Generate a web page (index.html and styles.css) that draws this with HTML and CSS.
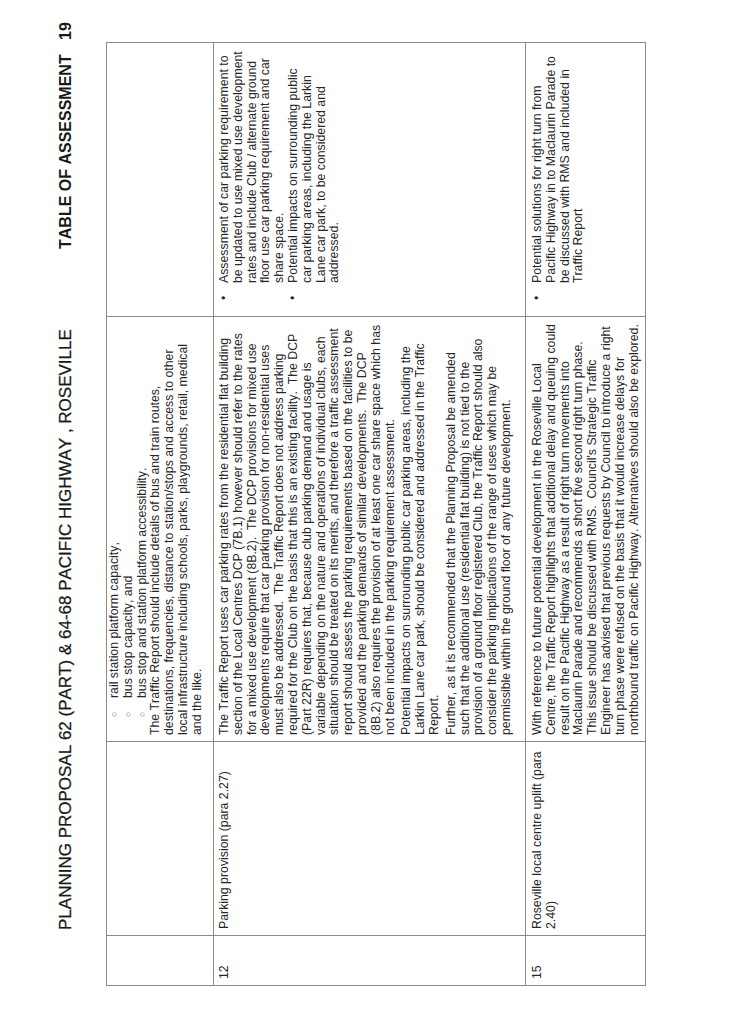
FILE: index.html
```html
<!DOCTYPE html>
<html lang="en">
<head>
<meta charset="utf-8">
<title>Table of Assessment 19</title>
<link rel="stylesheet" href="styles.css">
</head>
<body>
<div class="page">
  <header class="head">
    <h1 class="title">PLANNING PROPOSAL 62 (PART) &amp; 64-68 PACIFIC HIGHWAY , ROSEVILLE</h1>
    <div class="section"><span class="section-name">TABLE OF ASSESSMENT</span><span class="pageno">19</span></div>
  </header>
  <table class="assess">
    <colgroup><col class="c-no"><col class="c-item"><col class="c-desc"><col class="c-rec"></colgroup>
    <tr class="r-cont">
      <td></td>
      <td></td>
      <td>
        <div class="desc">
          <ul class="circles">
            <li><span class="mk">○</span><span>rail station platform capacity,</span></li>
            <li><span class="mk">○</span><span>bus stop capacity, and</span></li>
            <li><span class="mk">○</span><span>bus stop and station platform accessibility.</span></li>
          </ul>
          <p>The Traffic Report should include details of bus and train routes, destinations, frequencies, distance to station/stops and access to other local infrastructure including schools, parks, playgrounds, retail, medical and the like.</p>
        </div>
      </td>
      <td></td>
    </tr>
    <tr class="r-12">
      <td>12</td>
      <td>Parking provision (para 2.27)</td>
      <td>
        <div class="desc">
          <p>The Traffic Report uses car parking rates from the residential flat building section of the Local Centres DCP (7B.1) however should refer to the rates for a mixed use development (8B.2).&nbsp; The DCP provisions for mixed use developments require that car parking provision for non-residential uses must also be addressed.&nbsp; The Traffic Report does not address parking required for the Club on the basis that this is an existing facility.&nbsp; The DCP (Part 22R) requires that, because club parking demand and usage is variable depending on the nature and operations of individual clubs, each situation should be treated on its merits, and therefore a traffic assessment report should assess the parking requirements based on the facilities to be provided and the parking demands of similar developments.&nbsp; The DCP (8B.2) also requires the provision of at least one car share space which has not been included in the parking requirement assessment.</p>
          <p class="gap">Potential impacts on surrounding public car parking areas, including the Larkin Lane car park, should be considered and addressed in the Traffic Report.</p>
          <p class="gap">Further, as it is recommended that the Planning Proposal be amended such that the additional use (residential flat building) is not tied to the provision of a ground floor registered Club, the Traffic Report should also consider the parking implications of the range of uses which may be permissible within the ground floor of any future development.</p>
        </div>
      </td>
      <td>
        <ul class="dots">
          <li><span class="mk">•</span><span>Assessment of car parking requirement to be updated to use mixed use development rates and include Club / alternate ground floor use car parking requirement and car share space.</span></li>
          <li><span class="mk">•</span><span>Potential impacts on surrounding public car parking areas, including the Larkin Lane car park, to be considered and addressed.</span></li>
        </ul>
      </td>
    </tr>
    <tr class="r-15">
      <td>15</td>
      <td>Roseville local centre uplift (para 2.40)</td>
      <td>
        <div class="desc">
          <p>With reference to future potential development in the Roseville Local Centre, the Traffic Report highlights that additional delay and queuing could result on the Pacific Highway as a result of right turn movements into Maclaurin Parade and recommends a short five second right turn phase.&nbsp; This issue should be discussed with RMS.&nbsp; Council's Strategic Traffic Engineer has advised that previous requests by Council to introduce a right turn phase were refused on the basis that it would increase delays for northbound traffic on Pacific Highway. Alternatives should also be explored.</p>
        </div>
      </td>
      <td>
        <ul class="dots">
          <li><span class="mk">•</span><span>Potential solutions for right turn from Pacific Highway in to Maclaurin Parade to be discussed with RMS and included in Traffic Report</span></li>
        </ul>
      </td>
    </tr>
  </table>
</div>
</body>
</html>
```
FILE: styles.css
```css
html, body {
  margin: 0;
  padding: 0;
  background: #ffffff;
}

/* The landscape sheet is laid out in vertical writing mode and turned
   half a turn, so its text reads bottom-to-top like the printed page. */
.page {
  width: 731px;
  height: 1032px;
  box-sizing: border-box;
  overflow: hidden;
  writing-mode: vertical-rl;
  text-orientation: sideways;
  transform: rotate(180deg);
  padding-block-start: 56px;
  font-family: "Liberation Sans", Arial, sans-serif;
  font-kerning: none;
  font-feature-settings: "kern" 0, "liga" 0;
  color: #262626;
}

.head {
  display: flex;
  justify-content: space-between;
  align-items: baseline;
  block-size: 20px;
  padding-inline: 102px 22px;
  margin-block-end: 30px;
}

.title {
  margin: 0;
  font-size: 17px;
  font-weight: normal;
  line-height: 20px;
  color: #1a1a1a;
  -webkit-text-stroke: 0.25px #1a1a1a;
}

.section {
  display: flex;
  align-items: baseline;
  gap: 15px;
  font-weight: bold;
  font-size: 16px;
  line-height: 20px;
  color: #1a1a1a;
}

.pageno {
  font-size: 16px;
}

.assess {
  margin-inline-start: 46px;
  inline-size: 943px;
  table-layout: fixed;
  border-collapse: collapse;
  font-size: 12.3px;
  line-height: 13.8px;
}

.c-no { inline-size: 50px; }
.c-item { inline-size: 194px; }
.c-desc { inline-size: 425px; }
.c-rec { inline-size: 274px; }

.assess td {
  border: 1px solid #8a8a8a;
  vertical-align: top;
  padding-block: 4px;
  padding-inline: 6px;
}

.r-cont { block-size: 107px; }
.r-12 { block-size: 312px; }
.r-15 { block-size: 120px; }

.r-cont td { padding-block-start: 1px; }
.r-15 td { padding-block-start: 5px; }

.desc {
  inline-size: 33.46em;
}

.assess p {
  margin: 0;
}

.assess p.gap {
  margin-block-start: 3px;
}

.circles, .dots {
  list-style: none;
  margin: 0;
  padding: 0;
}

.circles li {
  display: grid;
  grid-template-columns: 19px 1fr;
  padding-inline-start: 18px;
}

.circles .mk {
  font-size: 9px;
  color: #555;
}

.dots li {
  display: grid;
  grid-template-columns: 17px 18.98em;
  padding-inline-start: 10px;
}

.dots .mk {
  font-size: 12px;
}
```
